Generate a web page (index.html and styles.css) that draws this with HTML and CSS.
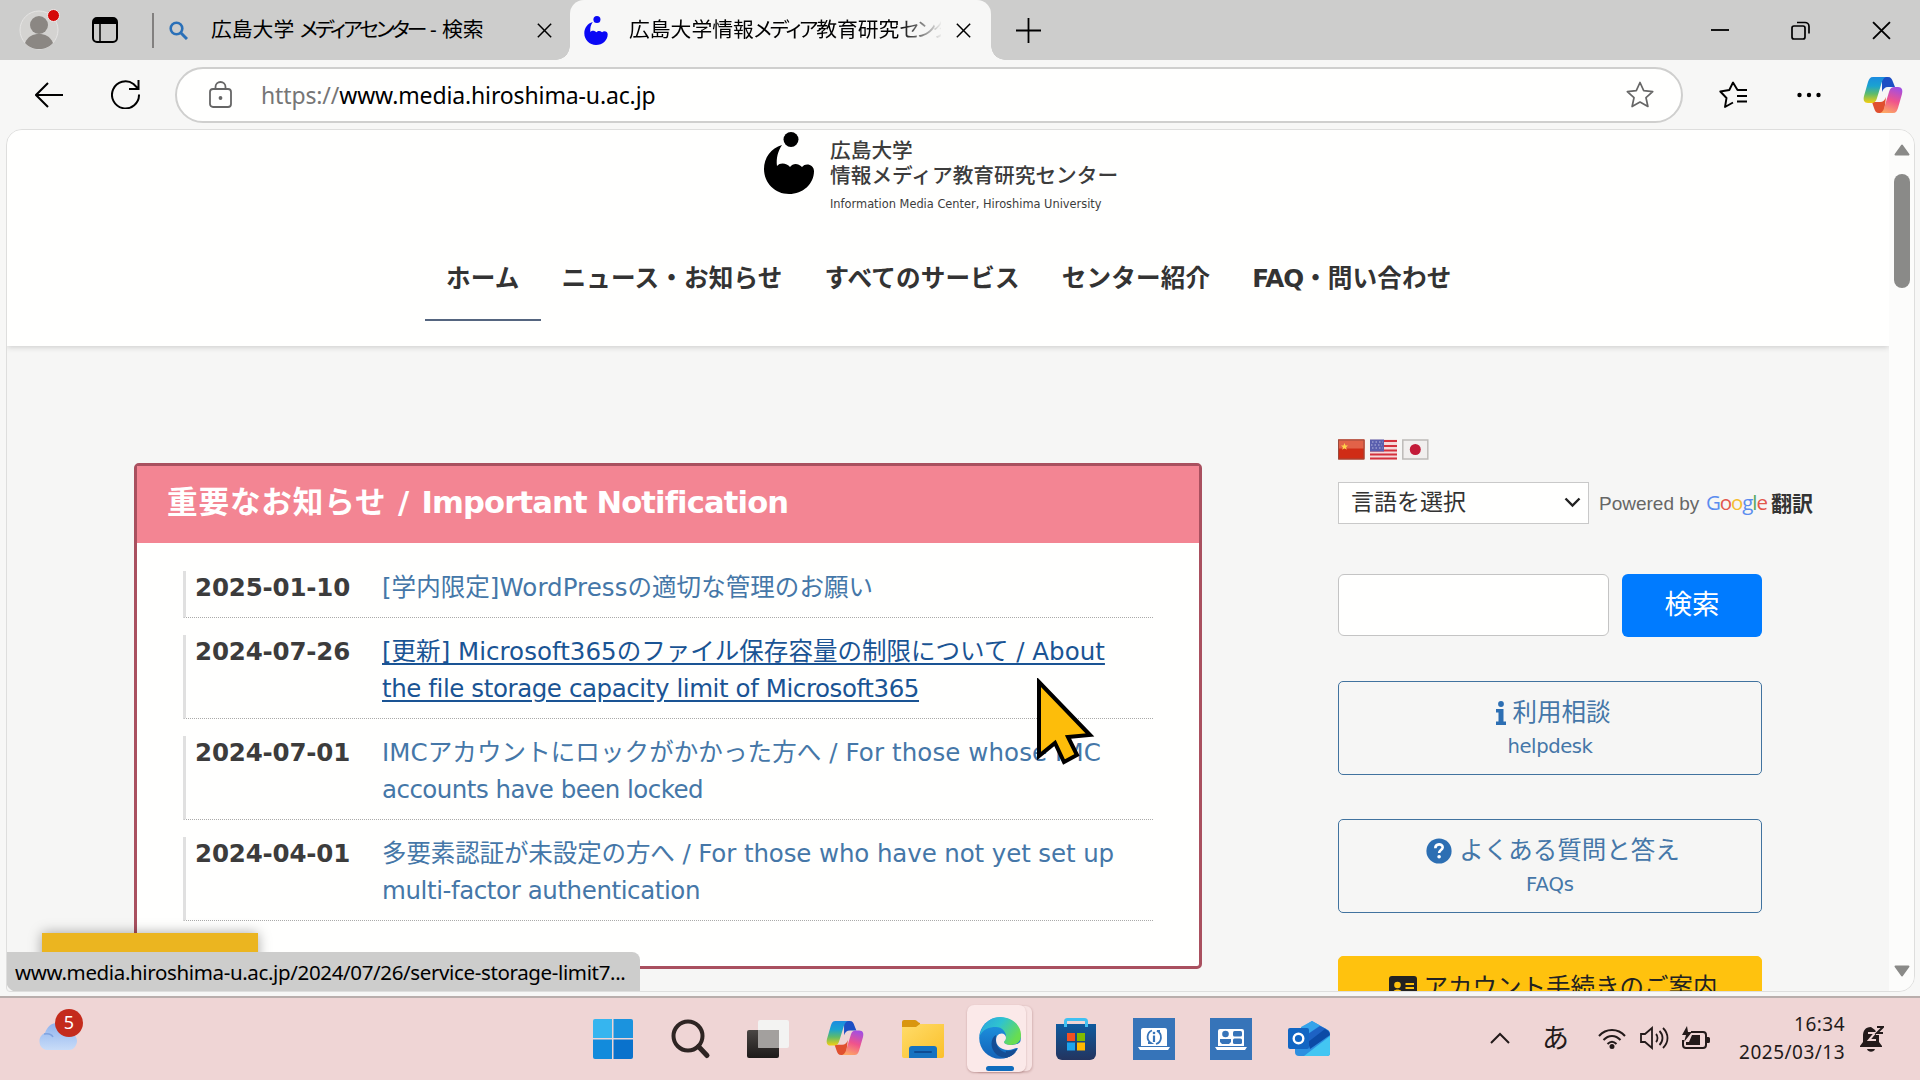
FILE: index.html
```html
<!DOCTYPE html>
<html lang="ja">
<head>
<meta charset="utf-8">
<title>広島大学情報メディア教育研究センター</title>
<link rel="stylesheet" href="styles.css">
</head>
<body>
<svg class="defs" width="0" height="0">
  <defs>
    <linearGradient id="cpA" x1="0" y1="0" x2="0" y2="1"><stop offset="0" stop-color="#1b8be0"/><stop offset=".35" stop-color="#1ba3d0"/><stop offset=".65" stop-color="#5fbb6a"/><stop offset="1" stop-color="#f5cf10"/></linearGradient>
    <linearGradient id="cpB" x1=".6" y1="0" x2=".3" y2="1"><stop offset="0" stop-color="#a44fe0"/><stop offset=".5" stop-color="#f0538c"/><stop offset="1" stop-color="#fda765"/></linearGradient>
    <linearGradient id="edA" x1="0" y1="0" x2="1" y2=".5"><stop offset="0" stop-color="#2a9fe0"/><stop offset=".5" stop-color="#2fc3cf"/><stop offset="1" stop-color="#68dd50"/></linearGradient>
    <linearGradient id="edB" x1="0" y1="0" x2="0" y2="1"><stop offset="0" stop-color="#1f9be6"/><stop offset="1" stop-color="#1362b8"/></linearGradient>
    <linearGradient id="fold" x1="0" y1="0" x2="1" y2="1"><stop offset="0" stop-color="#ffdc6a"/><stop offset="1" stop-color="#fbc02a"/></linearGradient>
    <linearGradient id="store" x1="0" y1="0" x2="0" y2="1"><stop offset="0" stop-color="#0e5a9e"/><stop offset="1" stop-color="#23345f"/></linearGradient>
    <linearGradient id="cloud" x1="0" y1="0" x2="0" y2="1"><stop offset="0" stop-color="#8fb3ee"/><stop offset="1" stop-color="#c8dcf8"/></linearGradient>
    <linearGradient id="tv" x1="0" y1="0" x2="0" y2="1"><stop offset="0" stop-color="#4a4644"/><stop offset="1" stop-color="#1d1a19"/></linearGradient>
    <symbol id="copilot" viewBox="0 0 40 38">
      <path d="M19 1h6c3 0 4 2 5 5l2 5h-7c-3 0-5 2-6 5z" fill="#1c4fc4"/>
      <path d="M21 37h-5c-3 0-4-2-5-5l-2-6h8c3 0 5-2 6-5z" fill="#e0502f"/>
      <path d="M10 1h13c-3 1-4 4-5 8l-4 13c-1 4-3 5-6 5H5c-4 0-5-3-4-7L5 6c1-3 2-5 5-5z" fill="url(#cpA)"/>
      <path d="M30 37H17c3-1 4-4 5-8l4-13c1-4 3-5 6-5h3c4 0 5 3 4 7l-4 14c-1 3-2 5-5 5z" fill="url(#cpB)"/>
    </symbol>
    <symbol id="mark" viewBox="0 0 50 62">
      <circle cx="27" cy="7.500" r="7.500"/>
      <path d="M18 13C7 16 0 26 0 37c0 14 11 25 25 25s25-10 25-23c0-6-8-9-12-4-4-4-9-4-12 0-3-4-10-5-13-1-1-8 1-15 5-21z"/>
    </symbol>
    <symbol id="x" viewBox="0 0 18 18"><path d="M1 1l16 16M17 1L1 17" fill="none" stroke="#000" stroke-width="1.800"/></symbol>
  </defs>
</svg>
<div class="screen">
  <header class="tabs">
    <div class="avatar">
      <svg width="40" height="40" viewBox="0 0 40 40"><circle cx="20" cy="20" r="19" fill="#d4d3d1" stroke="#e6e5e4"/><circle cx="20" cy="15" r="9" fill="#8b8783"/><path d="M6 33c3-7 8-9 14-9s11 2 14 9c-4 4-8 6-14 6s-10-2-14-6z" fill="#8b8783"/></svg>
      <i class="dot"></i>
    </div>
    <svg class="tabicon" width="26" height="26" viewBox="0 0 26 26"><rect x="1" y="1" width="24" height="24" rx="4" fill="none" stroke="#000" stroke-width="2"/><path d="M1 7V5a4 4 0 0 1 4-4h16a4 4 0 0 1 4 4v2z"/><path d="M8 7v18" stroke="#000" stroke-width="1.500"/></svg>
    <i class="sep"></i>
    <div class="tab tab-search">
      <svg width="19" height="19" viewBox="0 0 19 19"><circle cx="7.500" cy="7.500" r="5.800" fill="none" stroke="#2a70b8" stroke-width="2.600"/><path d="M12 12l6 6" stroke="#2a70b8" stroke-width="3"/></svg>
      <span class="ttl t1">広島大学 <span class="kana">メディアセンター</span> - 検索</span>
      <svg class="cl" width="15" height="15"><use href="#x"/></svg>
    </div>
    <div class="tab tab-on">
      <svg class="fav" width="24" height="29"><use href="#mark"/></svg>
      <span class="ttl t2">広島大学情報<span class="kana">メディア</span>教育研究<span class="kana">センタ</span></span>
      <svg class="cl" width="15" height="15"><use href="#x"/></svg>
    </div>
    <svg class="plus" width="25" height="25" viewBox="0 0 25 25"><path d="M12.500 0v25M0 12.500h25" stroke="#000" stroke-width="1.800"/></svg>
    <div class="winbtns">
      <svg width="18" height="18" viewBox="0 0 18 18"><path d="M0 9h18" stroke="#000" stroke-width="1.800"/></svg>
      <svg width="19" height="19" viewBox="0 0 19 19" fill="none" stroke="#000" stroke-width="1.700"><rect x="1" y="5" width="13" height="13" rx="2"/><path d="M6 1.500h8a4 4 0 0 1 4 4v7"/></svg>
      <svg width="19" height="19"><use href="#x"/></svg>
    </div>
  </header>
  <div class="toolbar">
    <svg class="back" width="28" height="26" viewBox="0 0 28 26" fill="none" stroke="#000" stroke-width="2"><path d="M13 1L1 13l12 12M1 13h27"/></svg>
    <svg class="reload" width="29" height="29" viewBox="0 0 29 29" fill="none" stroke="#000" stroke-width="2"><path d="M28 14.500A13.500 13.500 0 1 1 22.500 4L27 8.500M27.500 0v9H18"/></svg>
    <div class="addr">
      <svg width="23" height="27" viewBox="0 0 23 27" fill="none" stroke="#666" stroke-width="1.800"><rect x="1" y="8" width="21" height="18" rx="3"/><path d="M6.500 8V6a5 5 0 0 1 10 0v2"/><circle cx="11.500" cy="17" r="1" fill="#666"/></svg>
      <span class="url"><span class="gray">https://</span>www.media.hiroshima-u.ac.jp</span>
      <svg class="star" width="28" height="27" viewBox="0 0 28 27"><path d="M14 1.500l3.700 8.200 9 1-6.700 6 1.900 8.800L14 21l-7.900 4.500L8 16.700l-6.700-6 9-1z" fill="none" stroke="#666" stroke-width="1.700" stroke-linejoin="round"/></svg>
    </div>
    <svg class="favs" width="28" height="27" viewBox="0 0 28 27" fill="none" stroke="#000" stroke-width="1.900" stroke-linejoin="round"><path d="M28 9h-9.500L14 1.500 10.300 9 1.300 10.500 7.500 17 6 26l8-4.500M18 15h10M18 20.500h10"/></svg>
    <svg class="more" width="24" height="6" viewBox="0 0 24 6"><circle cx="2.500" cy="3" r="2.200"/><circle cx="12" cy="3" r="2.200"/><circle cx="21.500" cy="3" r="2.200"/></svg>
    <svg class="cop" width="40" height="38"><use href="#copilot"/></svg>
  </div>
  <main class="view">
    <div class="page">
      <div class="sitehead">
        <div class="logo">
          <svg width="50" height="62"><use href="#mark"/></svg>
          <div class="logotext">
            <div>広島大学</div>
            <div>情報メディア教育研究センター</div>
            <div class="l3">Information Media Center, Hiroshima University</div>
          </div>
        </div>
        <nav class="nav">
          <a class="on">ホーム</a><a>ニュース・お知らせ</a><a>すべてのサービス</a><a>センター紹介</a><a><span class="faq">FAQ</span>・問い合わせ</a>
        </nav>
      </div>
      <div class="cols">
        <section class="notice">
          <h2><span class="jp">重要なお知らせ / </span>Important Notification</h2>
          <ul>
            <li><b>2025-01-10</b><a class="a1">[学内限定]WordPressの適切な管理のお願い</a></li>
            <li><b>2024-07-26</b><a class="hover">[更新] Microsoft365のファイル保存容量の制限について / About<br><span class="a3">the file storage capacity limit of Microsoft365</span></a></li>
            <li><b>2024-07-01</b><a><span class="a4">IMCアカウントにロックがかかった方へ / For those whose IMC</span><br><span class="a5">accounts have been locked</span></a></li>
            <li><b>2024-04-01</b><a><span class="a6">多要素認証が未設定の方へ / For those who have not yet set up</span><br><span class="a7">multi-factor authentication</span></a></li>
          </ul>
        </section>
        <aside class="side">
          <div class="flags">
            <svg width="27" height="21" viewBox="0 0 27 21"><rect y=".5" width="26.500" height="20" rx="1" fill="#d02c16"/><rect width="26.500" height="9" y=".5" fill="#e26248"/><path d="M6.500 4l1 2.500H10L8 8.200l.8 2.500-2.300-1.500-2.300 1.500L5 8.200 3 6.500h2.500z" fill="#ffd24a"/><rect x=".5" y="1" width="25.500" height="19" fill="none" stroke="#9a4a3c"/></svg>
            <svg width="27" height="21" viewBox="0 0 27 21"><rect width="27" height="20" y=".5" fill="#f4dada"/><path d="M0 2h27M0 7h27M0 11.500h27M0 15.500h27M0 19.500h27" stroke="#d3313d" stroke-width="2.200"/><rect y=".5" width="14" height="12" fill="#5a5fae"/><path d="M2 3h11M1 6h11M2 9h11" stroke="#b8bade" stroke-width="1.200" stroke-dasharray="1.500 2"/></svg>
            <svg width="27" height="21" viewBox="0 0 27 21"><rect x=".8" y="1" width="25" height="19" fill="#f1efee" stroke="#bdbbb8" stroke-width="1.500"/><circle cx="13.300" cy="10.500" r="5.500" fill="#c31a38"/></svg>
          </div>
          <div class="lang">
            <div class="select">言語を選択<svg width="17" height="11" viewBox="0 0 17 11"><path d="M1.500 1.500l7 7 7-7" fill="none" stroke="#222" stroke-width="2.400"/></svg></div>
            <span class="pw">Powered by</span>
            <span class="google"><i class="b">G</i><i class="r">o</i><i class="y">o</i><i class="b">g</i><i class="g">l</i><i class="r">e</i></span>
            <strong>翻訳</strong>
          </div>
          <div class="search"><div class="inp"></div><div class="btn">検索</div></div>
          <div class="box"><div class="big"><svg width="10" height="24" viewBox="0 0 10 24" fill="#2d6fb3"><circle cx="5" cy="3" r="2.900"/><path d="M0 8h7.500v12.500H10V24H0v-3.500h2.500v-9H0z"/></svg>利用相談</div><div class="small hd">helpdesk</div></div>
          <div class="box"><div class="big"><svg width="26" height="26" viewBox="0 0 26 26"><circle cx="13" cy="13" r="12.600" fill="#2d6fb3"/><path d="M9.300 10.200c0-5 7.400-4.800 7.400-.9 0 2.800-3.600 2.700-3.600 5.700" fill="none" stroke="#fff" stroke-width="2.600"/><circle cx="13.100" cy="18.700" r="1.800" fill="#fff"/></svg>よくある質問と答え</div><div class="small">FAQs</div></div>
          <div class="box acc"><div class="big"><svg width="28" height="24" viewBox="0 0 28 24"><rect width="28" height="24" rx="3" fill="#222"/><circle cx="8.500" cy="9" r="3.300" fill="#ffc20e"/><path d="M3.500 18c0-6 10-6 10 0z" fill="#ffc20e"/><path d="M16.500 8H25M16.500 12H25M16.500 16H25" stroke="#ffc20e" stroke-width="1.800"/></svg>アカウント手続きのご案内</div></div>
        </aside>
      </div>
    </div>
    <div class="scroll">
      <svg width="16" height="12" viewBox="0 0 16 12"><path d="M8 1.500l6.500 9h-13z" fill="#8a8a88" stroke="#8a8a88" stroke-width="2" stroke-linejoin="round"/></svg>
      <i class="thumb"></i>
      <svg class="down" width="16" height="12" viewBox="0 0 16 12"><path d="M8 10.500l6.500-9h-13z" fill="#8a8a88" stroke="#8a8a88" stroke-width="2" stroke-linejoin="round"/></svg>
    </div>
    <div class="translate"></div>
    <div class="status">www.media.hiroshima-u.ac.jp/2024/07/26/service-storage-limit7...</div>
  </main>
  <footer class="task">
    <div class="weather">
      <svg width="42" height="28" viewBox="0 0 42 28"><path d="M10 27a9 9 0 0 1-1-17C11 4 15 0 21 0c8 0 11 5 12 10 5 0 8 4 8 8s-3 9-8 9z" fill="url(#cloud)"/><path d="M8 11c5-1 8 1 9 3" fill="none" stroke="#7fa3e0" stroke-width="1.500"/></svg>
      <span class="badge">5</span>
    </div>
    <div class="apps">
      <svg width="42" height="42" viewBox="0 0 42 42"><path d="M3 1h17v19H1V3a2 2 0 0 1 2-2z" fill="#36b5ef"/><path d="M21.500 1H39a2 2 0 0 1 2 2v17H21.500z" fill="#1b93de"/><path d="M1 21.500h19V41H3a2 2 0 0 1-2-2z" fill="#128bdc"/><path d="M21.500 21.500H41V39a2 2 0 0 1-2 2H21.500z" fill="#0a72cc"/></svg>
      <svg width="42" height="42" viewBox="0 0 42 42" fill="none" stroke="#2e2523"><circle cx="19" cy="18" r="14.500" stroke-width="4"/><path d="M29.500 28.500l8.500 9" stroke-width="5" stroke-linecap="round"/></svg>
      <svg width="42" height="42" viewBox="0 0 42 42"><rect y="12" width="32" height="28" rx="2" fill="url(#tv)"/><rect x="11" y="2" width="31" height="28" rx="2" fill="#f3f3f2"/><path d="M11 12h21v18H12a1 1 0 0 1-1-1z" fill="#a3a09e"/></svg>
      <svg width="42" height="42"><use href="#copilot" x="2" y="2" width="38" height="36"/></svg>
      <svg width="42" height="42" viewBox="0 0 42 42"><path d="M0 4a2 2 0 0 1 2-2h11c2 0 3 3 5 3h0v6H0z" fill="#d9960e"/><path d="M0 9h14l4-3h24v32a2 2 0 0 1-2 2H2a2 2 0 0 1-2-2z" fill="url(#fold)"/><path d="M7 40V31a3 3 0 0 1 3-3h22a3 3 0 0 1 3 3v9z" fill="#1672c0"/><path d="M13 34h16" stroke="#0d4c94" stroke-width="2" stroke-linecap="round"/></svg>
      <div class="edge"><svg width="42" height="42" viewBox="0 0 42 42"><circle cx="21" cy="21" r="20.800" fill="url(#edB)"/><path d="M2 14C6 4 14 0 21 0c13 0 21 9 21 18 0 8-6 10-10 10-5 0-7-2-7-3s2-2 2-6-4-9-10-9C10 10 4 12 0 20z" fill="url(#edA)"/><path d="M17 18c-6 3-6 14 0 19 5 5 14 5 20-2-4 2-10 2-14-1-5-3-7-9-6-16z" fill="#154d94"/><path d="M18 19c-3 6 1 14 11 14 4 0 7-2 9-2l4 2v-9c-3 4-8 4-10 4-5 0-7-2-7-3s2-2 2-4c0-5-6-6-9-2z" fill="#fbe9e9"/><path d="M26 41c6-1 10-5 12-9 1-1-6 3-11 2z" fill="#154d94"/></svg></div>
      <svg width="42" height="42" viewBox="0 0 42 42"><path d="M1 6h40v30a6 6 0 0 1-6 6H7a6 6 0 0 1-6-6z" fill="url(#store)"/><path d="M10.500 9V3.500a2 2 0 0 1 2-2h17a2 2 0 0 1 2 2V9" fill="none" stroke="#3fc0f2" stroke-width="3"/><path d="M12 15h8v8h-8z" fill="#f25022"/><path d="M22 15h8v8h-8z" fill="#7fba00"/><path d="M12 24.500h8v8h-8z" fill="#1ca5ee"/><path d="M22 24.500h8v8h-8z" fill="#ffb900"/></svg>
      <svg width="42" height="42" viewBox="0 0 42 42"><path d="M0 0h42v42H0z" fill="#3674b9"/><path d="M10 10h22a2 2 0 0 1 2 2v16H8V12a2 2 0 0 1 2-2zM5 29h32l-2 3H7z" fill="#fff"/><path d="M19 12.500a7 7 0 0 0-1 12.500h-3M23 26a7 7 0 0 0 1-13h3" fill="none" stroke="#3674b9" stroke-width="1.800"/><path d="M21 17.500v6.500" stroke="#3674b9" stroke-width="2.200"/><circle cx="21" cy="15" r="1.300" fill="#3674b9"/></svg>
      <svg width="42" height="42" viewBox="0 0 42 42"><path d="M0 0h42v42H0z" fill="#3674b9"/><path d="M10 11h22a2 2 0 0 1 2 2v15H8V13a2 2 0 0 1 2-2zM5 29h32l-2 3H7z" fill="#fff"/><g fill="#3674b9"><circle cx="15.500" cy="16" r="3.300"/><path d="M10 21h11v3l-2 2h-7l-2-2z"/><rect x="23" y="13" width="9" height="5.500" rx="1.500"/><rect x="23" y="20.500" width="9" height="5.500" rx="1.500"/></g></svg>
      <svg width="42" height="42" viewBox="0 0 42 42"><path d="M7 14L24 3l16 9c1.500 1 2 2 2 4v19a3 3 0 0 1-3 3H11a4 4 0 0 1-4-4z" fill="#2d8fe0"/><path d="M13 9l11-6 8 4.500L14 20z" fill="#35a3ea"/><path d="M14 20L32 8l6 3-18 15z" fill="#1d62c4"/><path d="M20 24l17-13c3 1 5 3 5 6L22 31z" fill="#0c4ba6"/><path d="M42 18v17a3 3 0 0 1-3 3H16z" fill="#43c6f2"/><rect y="10" width="21" height="21" rx="2" fill="#1266c3"/><circle cx="10.500" cy="20.500" r="4.800" fill="none" stroke="#fff" stroke-width="2.400"/></svg>
    </div>
    <div class="tray">
      <svg class="chev" width="20" height="12" viewBox="0 0 20 12"><path d="M1 11l9-9 9 9" fill="none" stroke="#231a1a" stroke-width="2"/></svg>
      <span class="ime">あ</span>
      <svg class="wifi" width="28" height="21" viewBox="0 0 28 21" fill="none" stroke="#231a1a" stroke-width="2"><path d="M1 8c7-8 19-8 26 0M5.500 12c5-5.500 12-5.500 17 0M9.500 16c3-3 6-3 9 0"/><circle cx="14" cy="18.500" r="1.500" fill="#231a1a"/></svg>
      <svg class="snd" width="29" height="24" viewBox="0 0 29 24" fill="none" stroke="#231a1a" stroke-width="1.800"><path d="M1 8h4l7-6v20l-7-6H1zM16 8c2 2 2 6 0 8M19.500 5c4 4 4 10 0 14M23 2c6 6 6 14 0 20"/></svg>
      <svg class="bat" width="28" height="24" viewBox="0 0 28 24"><path d="M9 6h12a3 3 0 0 1 3 3v10a3 3 0 0 1-3 3H4a3 3 0 0 1-3-3v-5" fill="none" stroke="#231a1a" stroke-width="2"/><path d="M25 11h1.500a1.500 1.500 0 0 1 1.500 1.500v3a1.500 1.500 0 0 1-1.500 1.500H25z" fill="#231a1a"/><path d="M10 9h8v10H4v-3h3z" fill="#231a1a"/><path d="M5 0L0 9h4l-2 7 8-10H6z" fill="#231a1a"/></svg>
      <div class="clock"><div>16:34</div><div>2025/03/13</div></div>
      <svg class="bell" width="24" height="27" viewBox="0 0 24 27"><path d="M11 2c-6 0-8 4-8 9v6l-3 4v1h22v-1l-3-4V8z" fill="#231a1a"/><path d="M7 24h8c-1 3.500-7 3.500-8 0z" fill="#231a1a"/><path d="M15 1h9v9h-8z" fill="#efd5d5"/><path d="M8 8h7l-6 7h7" fill="none" stroke="#efd5d5" stroke-width="2"/><path d="M17 2h6l-6 6h6" fill="none" stroke="#231a1a" stroke-width="2"/></svg>
    </div>
  </footer>
  <svg class="cursor" width="62" height="90" viewBox="0 0 62 90"><path d="M3 4v74l16-13 9 19 13-7-9-18 22-2z" fill="#fdbd0a" stroke="#000" stroke-width="4"/></svg>
</div>
</body>
</html>
```
FILE: styles.css
```css
* { box-sizing: border-box; }
body { margin: 0; overflow: hidden; font-family: "Noto Sans", "Noto Sans CJK JP", sans-serif; color: #000; }
svg { display: block; flex: none; }
i { font-style: normal; }
.defs { position: absolute; }
.screen { position: relative; width: 1920px; height: 1080px; display: flex; flex-direction: column; background: #f7f7f6; overflow: hidden; }

.tabs { height: 60px; flex: none; display: flex; align-items: center; background: #cdcdcc; }
.avatar { position: relative; margin-left: 19px; width: 40px; height: 40px; }
.dot { position: absolute; left: 28px; top: -1px; width: 13px; height: 13px; border-radius: 50%; background: #d50a0a; border: 1px solid #eee; }
.tabicon { margin-left: 33px; }
.sep { width: 2px; height: 35px; margin-left: 34px; background: #82807f; }
.tab { height: 60px; display: flex; align-items: center; flex: none; }
.tab-search { width: 416px; padding-left: 15px; position: relative; }
.ttl { font-size: 20.800px; white-space: nowrap; font-feature-settings: "palt"; line-height: 40px; padding-bottom: 3px; }
.kana { letter-spacing: -2.900px; }
.t1 { margin-left: 23px; width: 326px; }
.tab-on { position: relative; width: 421px; background: #f7f7f6; border-radius: 14px 14px 0 0; padding-left: 14px; }
.tab-on::before, .tab-on::after { content: ""; position: absolute; bottom: 0; width: 14px; height: 14px; }
.tab-on::before { left: -14px; background: radial-gradient(circle at 0 0, #cdcdcc 13.5px, #f7f7f6 14px); }
.tab-on::after { right: -14px; background: radial-gradient(circle at 100% 0, #cdcdcc 13.5px, #f7f7f6 14px); }
.fav { fill: #0a08f5; }
.t2 { margin-left: 21px; width: 312px; -webkit-mask-image: linear-gradient(90deg, #000 270px, transparent 314px); mask-image: linear-gradient(90deg, #000 270px, transparent 314px); }
.t2 .kana { letter-spacing: -2.300px; }
.tab-on .cl { margin-left: 15px; }
.plus { margin-left: 25px; }
.winbtns { margin-left: auto; margin-right: 29px; display: flex; gap: 62px; align-items: center; }

.toolbar { height: 69px; flex: none; display: flex; align-items: center; }
.back { margin-left: 35px; }
.reload { margin-left: 48px; }
.addr { margin-left: 35px; width: 1508px; height: 56px; border: 2px solid #cfcfce; border-radius: 28px; background: #fffffe; display: flex; align-items: center; padding: 0 27px 0 32px; }
.url { margin-left: 29px; font-size: 23px; letter-spacing: -.13px; white-space: nowrap; padding-top: 1px; }
.gray { color: #767676; }
.star { margin-left: auto; }
.favs { margin-left: 36px; }
.more { margin-left: 50px; }
.cop { margin-left: 42px; }

.view { position: relative; margin-left: 6px; width: 1909px; height: 863px; flex: none; display: flex; border: 1px solid #dededd; border-radius: 16px 16px 16px 4px; background: #f6f6f5; overflow: hidden; font-family: "DejaVu Sans", "Noto Sans CJK JP", sans-serif; }
.page { width: 1882px; height: 861px; overflow: hidden; flex: none; padding-left: 1px; }
.sitehead { height: 216px; margin-left: -1px; padding: 2px 0 0 1px; background: #fffffe; box-shadow: 0 1px 6px rgba(0,0,0,.18); }
.logo { display: flex; margin-left: 756px; height: 100px; }
.logotext { margin-left: 16px; color: #3c3c3c; white-space: nowrap; font-size: 20.700px; font-weight: 500; line-height: 25px; padding-top: 5px; font-family: "Noto Sans CJK JP", sans-serif; }
.l3 { font: 11.400px/20px "DejaVu Sans", sans-serif; margin-top: 7px; }
.nav { display: flex; margin-left: 417px; }
.nav a { height: 89px; padding: 22px 21px 0; font-size: 24.600px; letter-spacing: .15px; line-height: 50px; font-weight: 700; color: #333; white-space: nowrap; }
.nav .faq { letter-spacing: -1px; }
.nav .on { border-bottom: 2px solid #55657f; }
.cols { display: flex; align-items: flex-start; }
.notice { width: 1068px; height: 506px; margin: 117px 0 0 126px; border: 3px solid #a9505f; border-radius: 5px; background: #fffffe; }
.notice h2 { margin: 0; height: 77px; background: #f38593; color: #fff; font-size: 30.600px; line-height: 74px; padding-left: 30px; white-space: nowrap; letter-spacing: -.87px; }
.notice .jp { letter-spacing: .85px; }
.notice ul { list-style: none; margin: 0; padding: 28px 46px 0 46px; display: flex; flex-direction: column; gap: 17px; }
.notice li { display: flex; border-left: 3px solid #e0e0e0; border-bottom: 1px dotted #aaa; height: 84px; font-size: 24.500px; line-height: 37px; padding-left: 9px; white-space: nowrap; }
.notice li:first-child { height: 47px; }
.notice li b { width: 187px; color: #3c3c3c; margin-top: -2px; letter-spacing: -.17px; }
.notice li a { color: #4577a8; margin-top: -2px; }
.notice li .a1 { letter-spacing: .06px; }
.notice li .hover { color: #1a5494; text-decoration: underline; text-underline-offset: 3px; letter-spacing: .03px; }
.a3 { letter-spacing: -.415px; }
.a4 { letter-spacing: .1px; }
.a5 { letter-spacing: -.53px; }
.a6 { letter-spacing: -.106px; }
.a7 { letter-spacing: -.41px; }
.side { margin: 93px 0 0 136px; width: 500px; }
.flags { display: flex; gap: 5px; }
.lang { display: flex; align-items: center; margin-top: 22px; height: 42px; white-space: nowrap; }
.select { width: 251px; height: 42px; border: 1px solid #c9c9c9; background: #fffffe; font-size: 23px; line-height: 38px; padding: 0 7px 2px 12px; display: flex; align-items: center; justify-content: space-between; color: #333; }
.pw { margin-left: 10px; width: 102px; font: 19px "Liberation Sans", sans-serif; color: #666; padding-top: 2px; }
.google { margin-left: 5px; width: 60px; font: 500 20.500px/24px "Open Sans", sans-serif; letter-spacing: -1.100px; padding-bottom: 2px; }
.b { color: #5b8def; } .r { color: #e2574c; } .y { color: #f5bd30; } .g { color: #55a860; }
.lang strong { margin-left: 5px; font-size: 21px; color: #333; padding-bottom: 3px; }
.search { display: flex; gap: 13px; margin-top: 50px; }
.inp { width: 271px; height: 62px; border: 1px solid #c4c4c4; border-radius: 6px; background: #fffffe; }
.btn { width: 140px; height: 63px; border-radius: 6px; background: #007bff; color: #fff; font-size: 27.500px; line-height: 60px; text-align: center; }
.box { width: 424px; height: 94px; margin-top: 44px; border: 1px solid #41739f; border-radius: 5px; color: #4577a8; text-align: center; padding-top: 12px; white-space: nowrap; }
.big { display: flex; gap: 7px; align-items: center; justify-content: center; font-size: 24.500px; line-height: 38px; padding-left: 6px; }
.small { font-size: 19.600px; line-height: 30px; }
.hd { letter-spacing: -.42px; }
.acc { background: #ffc20e; border-color: #ffc20e; color: #222; height: 120px; margin-top: 43px; }

.scroll { width: 26px; background: #fcfcfb; display: flex; flex-direction: column; align-items: center; padding-top: 14px; }
.thumb { width: 16px; height: 114px; border-radius: 8px; background: #8a8a88; margin-top: 18px; }
.down { margin-top: auto; margin-bottom: 14px; }
.translate { position: absolute; left: 35px; top: 803px; width: 216px; height: 60px; background: #ebb520; box-shadow: 0 0 12px rgba(0,0,0,.35); }
.status { position: absolute; left: -1px; top: 822px; width: 634px; height: 40px; background: #cdcdcc; border-radius: 0 8px 0 12px; padding-left: 9px; font: 20.500px/41px "Noto Sans", sans-serif; letter-spacing: -.36px; white-space: nowrap; }

.task { margin-top: 4px; height: 84px; flex: none; border-top: 2px solid #b9aeac; background: #efd5d5; display: flex; align-items: center; }
.weather { position: relative; margin-left: 36px; width: 47px; height: 42px; padding-top: 14px; margin-top: -18px; }
.badge { position: absolute; left: 19px; top: 0; width: 28px; height: 28px; border-radius: 50%; background: #c42b1c; color: #fff; font-size: 18px; line-height: 27px; text-align: center; }
.apps { margin-left: 509px; display: flex; gap: 35.400px; align-items: center; margin-top: -1px; }
.edge { position: relative; width: 59px; height: 67px; margin: 0 -6px 0 -12px; padding: 12px 0 0 12px; border-radius: 7px; background: #fbe9e9; box-shadow: 0 1px 2px rgba(120,60,60,.35), 7px 0 0 -1px #f7e3e3, 7px 1px 2px rgba(120,60,60,.2); }
.edge::after { content: ""; position: absolute; left: 19px; bottom: 1px; width: 28px; height: 5px; border-radius: 3px; background: #0f6cbd; }
.tray { margin-left: auto; display: flex; align-items: center; color: #231a1a; margin-top: -2px; }
.ime { margin-left: 32px; font-size: 27px; line-height: 40px; width: 27px; }
.wifi { margin-left: 29px; }
.snd { margin-left: 14px; }
.bat { margin-left: 13px; }
.clock { margin-left: 26px; width: 109px; font-size: 19px; letter-spacing: .48px; line-height: 28px; text-align: right; white-space: nowrap; }
.bell { margin-left: 15px; margin-right: 36px; }
.cursor { position: absolute; left: 1036px; top: 678px; }
```
